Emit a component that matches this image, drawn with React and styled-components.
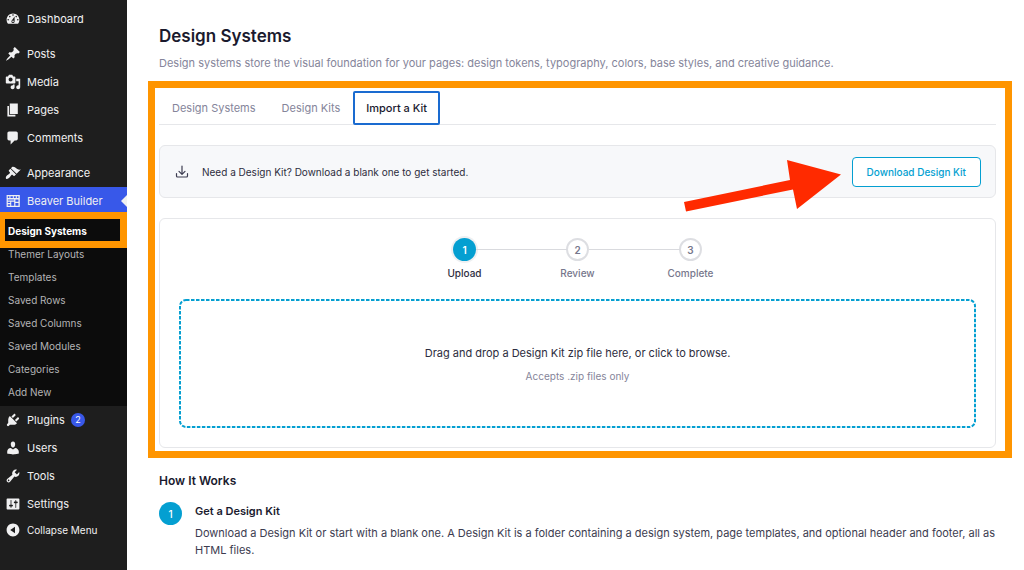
import React from "react";
import styled, { createGlobalStyle, css } from "styled-components";

const GlobalStyle = createGlobalStyle`
  *, *::before, *::after { box-sizing: border-box; }
  body {
    margin: 0;
    background: #fff;
    font-family: Inter, "Liberation Sans", sans-serif;
    font-size: 11px;
    color: #3c3c50;
  }
  h1, h2, h3, p, ul, ol { margin: 0; padding: 0; }
  ul, ol { list-style: none; }
  button { font-family: inherit; cursor: pointer; }
`;

const orange = "#ff9500";
const cyan = "#049fd1";
const line = "#e6e7ea";

const Page = styled.div`
  display: flex;
  min-height: 100vh;
`;

/* ---------- Sidebar ---------- */

const Sidebar = styled.nav`
  flex: 0 0 127px;
  padding-top: 5px;
  background: #1e1e1e;
`;

const MenuGroup = styled.ul`
  margin-bottom: ${(p) => (p.$spaced ? "7px" : "0")};
`;

const MenuLink = styled.a`
  position: relative;
  display: flex;
  align-items: center;
  gap: 6px;
  height: 28px;
  padding-left: 5px;
  color: #f0f0f1;
  font-size: 11px;
  text-decoration: none;
  white-space: nowrap;
  ${(p) =>
    p.$active &&
    css`
      background: #3858e9;
      &::after {
        content: "";
        position: absolute;
        right: 0;
        top: 8px;
        border: 6px solid transparent;
        border-left: 0;
        border-right-color: #f0f0f1;
      }
    `}
`;

const CollapseButton = styled.button`
  display: flex;
  align-items: center;
  gap: 6px;
  width: 100%;
  height: 24px;
  padding: 0 0 0 5px;
  border: 0;
  background: none;
  color: #f0f0f1;
  font-size: 10px;
`;

const MenuIcon = styled.svg`
  width: 16px;
  height: 16px;
  flex: none;
  fill: currentColor;
`;

const Badge = styled.span`
  display: grid;
  place-items: center;
  width: 14px;
  height: 14px;
  border-radius: 50%;
  background: #3858e9;
  color: #fff;
  font-size: 9px;
  line-height: 14px;
`;

const SubMenu = styled.ul`
  padding: 4px 0 3px;
  background: #0c0c0c;
`;

const SubItem = styled.li`
  position: relative;
`;

const SubLink = styled.a`
  display: flex;
  align-items: center;
  height: 23px;
  padding-left: 8px;
  color: ${(p) => (p.$current ? "#fff" : "#b4b4b6")};
  font-size: 10px;
  font-weight: ${(p) => (p.$current ? 700 : 400)};
  text-decoration: none;
`;

const SubHighlight = styled.span`
  position: absolute;
  inset: -7px 0 -6px -2px;
  border: 7px solid ${orange};
  pointer-events: none;
  clip-path: inset(0 0 0 2px);
`;

/* ---------- Main ---------- */

const Main = styled.main`
  flex: 1;
  min-width: 0;
  padding: 25px 12px 0 21px;
`;

const Header = styled.header`
  padding-left: 11px;
  margin-bottom: 10px;
`;

const Title = styled.h1`
  font-size: 17px;
  line-height: 22px;
  font-weight: 600;
  color: #1a1a2e;
`;

const Subtitle = styled.p`
  margin-top: 8px;
  line-height: 16px;
  font-size: 11px;
  color: #85859a;
`;

const Callout = styled.section`
  border: 7px solid ${orange};
  padding: 3px 9px 3px 4px;
`;

const Tabs = styled.div`
  display: flex;
  border-bottom: 1px solid ${line};
`;

const Tab = styled.button`
  height: 34px;
  margin-bottom: -1px;
  padding: 0 11px;
  border: 2px solid ${(p) => (p.$active ? "#1a6bd0" : "transparent")};
  border-radius: 2px;
  background: none;
  color: ${(p) => (p.$active ? "#1a1a2e" : "#85859a")};
  font-size: 11px;
  font-weight: ${(p) => (p.$active ? 500 : 400)};
`;

const Notice = styled.div`
  display: flex;
  align-items: center;
  gap: 12px;
  height: 53px;
  margin-top: 20px;
  padding: 0 14px;
  border: 1px solid ${line};
  border-radius: 6px;
  background: #f7f8fa;
`;

const NoticeIcon = styled.svg`
  width: 16px;
  height: 16px;
  flex: none;
  fill: none;
  stroke: #3c3c50;
  stroke-width: 1.2;
  stroke-linecap: round;
  stroke-linejoin: round;
`;

const NoticeText = styled.p`
  flex: 1;
  font-size: 10px;
  color: #2d2d40;
`;

const ButtonWrap = styled.div`
  position: relative;
`;

const OutlineButton = styled.button`
  height: 30px;
  padding: 0 14px;
  border: 1px solid ${cyan};
  border-radius: 4px;
  background: #fff;
  color: ${cyan};
  font-size: 10px;
  font-weight: 500;
`;

const Arrow = styled.svg`
  position: absolute;
  right: calc(100% + 10px);
  top: 0;
  width: 160px;
  height: 56px;
  overflow: visible;
  fill: #ff2a00;
  pointer-events: none;
`;

const Card = styled.div`
  margin-top: 20px;
  padding: 19px;
  border: 1px solid ${line};
  border-radius: 6px;
`;

const Steps = styled.ol`
  display: flex;
  justify-content: center;
  gap: 13px;
`;

const Step = styled.li`
  position: relative;
  display: flex;
  flex-direction: column;
  align-items: center;
  gap: 5px;
  width: 100px;
  font-size: 10px;
  line-height: 14px;
  font-weight: 500;
  color: ${(p) => (p.$active ? "#2d2d40" : "#77778c")};

  &:not(:first-child)::before {
    content: "";
    position: absolute;
    right: calc(50% + 11px);
    top: 11px;
    width: 91px;
    height: 1px;
    background: #d9dade;
  }
`;

const StepNumber = styled.span`
  display: grid;
  place-items: center;
  width: 23px;
  height: 23px;
  border: ${(p) => (p.$active ? "0" : "2px solid #dddee2")};
  border-radius: 50%;
  background: ${(p) => (p.$active ? cyan : "#fff")};
  box-shadow: ${(p) => (p.$active ? "0 0 0 2px #eef0f2" : "none")};
  color: ${(p) => (p.$active ? "#fff" : "#77778c")};
  font-size: 10px;
  font-weight: 600;
`;

const DropZone = styled.button`
  position: relative;
  display: flex;
  flex-direction: column;
  align-items: center;
  justify-content: center;
  gap: 8px;
  width: 100%;
  height: 129px;
  margin-top: 19px;
  border: 0;
  background: #fff;
`;

const DashedOutline = styled.svg`
  position: absolute;
  inset: 0;
  width: 100%;
  height: 100%;
  pointer-events: none;

  rect {
    width: calc(100% - 2px);
    height: calc(100% - 2px);
    fill: none;
    stroke: ${cyan};
    stroke-width: 2;
    stroke-dasharray: 3.5 1.5;
  }
`;

const DropTitle = styled.span`
  font-size: 11px;
  line-height: 16px;
  color: #2d2d40;
`;

const DropHint = styled.span`
  font-size: 10px;
  line-height: 14px;
  color: #85859a;
`;

const HowSection = styled.section`
  padding: 14px 12px 12px 11px;
`;

const HowTitle = styled.h2`
  font-size: 12px;
  line-height: 18px;
  font-weight: 600;
  color: #1a1a2e;
`;

const HowItem = styled.li`
  display: flex;
  gap: 13px;
  margin-top: 12px;
`;

const HowNumber = styled.span`
  display: grid;
  place-items: center;
  flex: none;
  width: 23px;
  height: 23px;
  border-radius: 50%;
  background: ${cyan};
  color: #fff;
  font-size: 10px;
  font-weight: 500;
`;

const HowHeading = styled.h3`
  margin-bottom: 5px;
  font-size: 11px;
  line-height: 18px;
  font-weight: 600;
  color: #1a1a2e;
`;

const HowText = styled.p`
  font-size: 11px;
  line-height: 17px;
  color: #3c3c50;
`;

/* ---------- Data ---------- */

const icons = {
  dashboard:
    "M3.76 16h12.48c1.09-1.37 1.76-3.11 1.76-5 0-4.42-3.58-8-8-8s-8 3.58-8 8c0 1.89.67 3.63 1.76 5zM10 4c.55 0 1 .45 1 1s-.45 1-1 1-1-.45-1-1 .45-1 1-1zM6 6c.55 0 1 .45 1 1s-.45 1-1 1-1-.45-1-1 .45-1 1-1zm8 0c.55 0 1 .45 1 1s-.45 1-1 1-1-.45-1-1 .45-1 1-1zm-5.37 5.55L12 7v6c0 1.1-.9 2-2 2s-2-.9-2-2c0-.57.24-1.08.63-1.45zM4 10c.55 0 1 .45 1 1s-.45 1-1 1-1-.45-1-1 .45-1 1-1zm12 0c.55 0 1 .45 1 1s-.45 1-1 1-1-.45-1-1 .45-1 1-1zm-5 3c0-.55-.45-1-1-1s-1 .45-1 1 .45 1 1 1 1-.45 1-1z",
  posts:
    "M10.44 3.02l1.82-1.82 6.36 6.35-1.83 1.82c-1.05-.68-2.48-.57-3.41.36l-.75.75c-.92.93-1.04 2.35-.35 3.41l-1.83 1.82-2.41-2.41-2.8 2.79c-.42.42-3.38 2.71-3.8 2.29s1.86-3.39 2.28-3.81l2.79-2.79L4.1 9.36l1.83-1.82c1.05.69 2.48.57 3.4-.36l.75-.75c.93-.92 1.05-2.35.36-3.41z",
  media:
    "M13 11V4c0-.55-.45-1-1-1h-1.67L9 1H5L3.67 3H2c-.55 0-1 .45-1 1v7c0 .55.45 1 1 1h10c.55 0 1-.45 1-1zM7 4.5c1.38 0 2.5 1.12 2.5 2.5S8.38 9.5 7 9.5 4.5 8.38 4.5 7 5.62 4.5 7 4.5zM14 6h5v10.5c0 1.38-1.12 2.5-2.5 2.5S14 17.88 14 16.5s1.12-2.5 2.5-2.5c.17 0 .34.02.5.05V9h-3V6zm-4 8.05V13h2v3.5c0 1.38-1.12 2.5-2.5 2.5S7 17.88 7 16.5 8.12 14 9.5 14c.17 0 .34.02.5.05z",
  pages: "M6 15V2h10v13H6zm-1 1h8v2H3V5h2v11z",
  comments:
    "M5 2h9c1.1 0 2 .9 2 2v7c0 1.1-.9 2-2 2h-2l-5 5v-5H5c-1.1 0-2-.9-2-2V4c0-1.1.9-2 2-2z",
  appearance:
    "M14.48 11.06L7.41 3.99l1.5-1.5c.5-.56 2.3-.47 3.51.32 1.21.8 1.43 1.28 2.91 2.1 1.18.64 2.45 1.26 4.45.85zm-.71.71L6.7 4.7 4.93 6.47c-.39.39-.39 1.02 0 1.41l1.06 1.06c.39.39.39 1.03 0 1.42-.6.6-1.43 1.11-2.21 1.69-.35.26-.7.53-1.01.84C1.43 14.23.4 16.08 1.4 17.07c.99 1 2.84-.03 4.18-1.36.31-.31.58-.66.85-1.02.57-.78 1.08-1.61 1.69-2.21.39-.39 1.02-.39 1.41 0l1.06 1.06c.39.39 1.02.39 1.41 0z",
  builder:
    "M2 2.5h16.500v15H2zM3.500 4v2.200h2V4zM6.800 4v2.200h3V4zM11 4v2.200h2.500V4zM14.800 4v2.200h2V4zM3.500 8v1.500h8V8zM13 8v3h3.800V8zM3.500 11v1.500h3V11zM7.800 11v5h3.700v-5zM3.500 14v2h3v-2zM13 12.500V16h3.800v-3.500z",
  plugins:
    "M13.11 4.36L9.87 7.6 8 5.73l3.24-3.24c.35-.34 1.05-.2 1.56.32.52.51.66 1.21.31 1.55zm-8 1.77l.91-1.12 9.01 9.01-1.19.84c-.71.71-2.63 1.16-3.82 1.16H6.14L4.9 17.26c-.59.59-1.54.59-2.12 0-.59-.58-.59-1.53 0-2.12l1.24-1.24v-3.88c0-1.13.4-3.19 1.09-3.89zm7.26 3.97l3.24-3.24c.34-.35 1.04-.21 1.55.31.52.51.66 1.21.31 1.55l-3.24 3.25z",
  users:
    "M10 9.25c-2.27 0-2.73-3.44-2.73-3.44C7 4.02 7.82 2 9.97 2c2.16 0 2.98 2.02 2.71 3.81 0 0-.41 3.44-2.68 3.44zm0 2.57L12.72 10c2.39 0 4.52 2.33 4.52 4.53v2.49s-3.65 1.13-7.24 1.13c-3.65 0-7.24-1.13-7.24-1.13v-2.49c0-2.25 1.94-4.48 4.47-4.48z",
  tools:
    "M16.68 9.77c-1.34 1.34-3.3 1.67-4.95.99l-5.41 6.52c-.99.99-2.59.99-3.58 0s-.99-2.59 0-3.57l6.52-5.42c-.68-1.65-.35-3.61.99-4.95 1.28-1.28 3.12-1.62 4.72-1.06l-2.89 2.89 2.82 2.82 2.86-2.87c.53 1.58.18 3.39-1.08 4.65zM3.81 16.21c.4.39 1.04.39 1.43 0 .4-.4.4-1.04 0-1.43-.39-.4-1.03-.4-1.43 0-.39.39-.39 1.03 0 1.43z",
  settings:
    "M18 16V4c0-.55-.45-1-1-1H3c-.55 0-1 .45-1 1v12c0 .55.45 1 1 1h14c.55 0 1-.45 1-1zM8 11h1c.55 0 1 .45 1 1s-.45 1-1 1H8v1.5c0 .28-.22.5-.5.5s-.5-.22-.5-.5V13H6c-.55 0-1-.45-1-1s.45-1 1-1h1V5.5c0-.28.22-.5.5-.5s.5.22.5.5V11zm5-2h-1c-.55 0-1-.45-1-1s.45-1 1-1h1V5.5c0-.28.22-.5.5-.5s.5.22.5.5V7h1c.55 0 1 .45 1 1s-.45 1-1 1h-1v5.5c0 .28-.22.5-.5.5s-.5-.22-.5-.5V9z",
  collapse:
    "M10 2c4.42 0 8 3.58 8 8s-3.58 8-8 8-8-3.580-8-8 3.580-8 8-8zm2.500 12V6L6.500 10z",
};

const menuGroups = [
  { spaced: true, items: [["dashboard", "Dashboard"]] },
  {
    spaced: true,
    items: [
      ["posts", "Posts"],
      ["media", "Media"],
      ["pages", "Pages"],
      ["comments", "Comments"],
    ],
  },
  {
    items: [
      ["appearance", "Appearance"],
      ["builder", "Beaver Builder"],
    ],
  },
];

const subItems = [
  "Design Systems",
  "Themer Layouts",
  "Templates",
  "Saved Rows",
  "Saved Columns",
  "Saved Modules",
  "Categories",
  "Add New",
];

const lowerItems = [
  ["plugins", "Plugins", 2],
  ["users", "Users"],
  ["tools", "Tools"],
  ["settings", "Settings"],
];

const tabs = ["Design Systems", "Design Kits", "Import a Kit"];
const steps = ["Upload", "Review", "Complete"];

function Icon({ name }) {
  return (
    <MenuIcon viewBox="0 0 20 20" aria-hidden="true">
      <path fillRule="evenodd" d={icons[name]} />
    </MenuIcon>
  );
}

function MenuItem({ icon, label, count }) {
  return (
    <li>
      <MenuLink href="#" $active={icon === "builder"}>
        <Icon name={icon} />
        {label}
        {count && <Badge>{count}</Badge>}
      </MenuLink>
    </li>
  );
}

export default function App() {
  return (
    <Page>
      <GlobalStyle />
      <Sidebar aria-label="Admin menu">
        {menuGroups.map((group, i) => (
          <MenuGroup key={i} $spaced={group.spaced}>
            {group.items.map(([icon, label]) => (
              <MenuItem key={icon} icon={icon} label={label} />
            ))}
          </MenuGroup>
        ))}
        <SubMenu>
          {subItems.map((label, i) => (
            <SubItem key={label}>
              <SubLink href="#" $current={i === 0}>
                {label}
              </SubLink>
              {i === 0 && <SubHighlight />}
            </SubItem>
          ))}
        </SubMenu>
        <MenuGroup>
          {lowerItems.map(([icon, label, count]) => (
            <MenuItem key={icon} icon={icon} label={label} count={count} />
          ))}
        </MenuGroup>
        <CollapseButton type="button">
          <Icon name="collapse" />
          Collapse Menu
        </CollapseButton>
      </Sidebar>

      <Main>
        <Header>
          <Title>Design Systems</Title>
          <Subtitle>
            Design systems store the visual foundation for your pages: design
            tokens, typography, colors, base styles, and creative guidance.
          </Subtitle>
        </Header>

        <Callout>
          <Tabs role="tablist">
            {tabs.map((label, i) => (
              <Tab key={label} type="button" role="tab" aria-selected={i === 2} $active={i === 2}>
                {label}
              </Tab>
            ))}
          </Tabs>

          <Notice>
            <NoticeIcon viewBox="0 0 16 16" aria-hidden="true">
              <path d="M8 2v8M5 7.300l3 3 3-3M2.500 9.500v2.500q0 1 1 1h9q1 0 1-1V9.500" />
            </NoticeIcon>
            <NoticeText>
              Need a Design Kit? Download a blank one to get started.
            </NoticeText>
            <ButtonWrap>
              <OutlineButton type="button">Download Design Kit</OutlineButton>
              <Arrow viewBox="0 0 160 56" aria-hidden="true">
                <polygon points="2,45 108,23 105,3 159,17.500 115,52 111,32.500 4,54.500" />
              </Arrow>
            </ButtonWrap>
          </Notice>

          <Card>
            <Steps>
              {steps.map((label, i) => (
                <Step key={label} $active={i === 0}>
                  <StepNumber $active={i === 0}>{i + 1}</StepNumber>
                  {label}
                </Step>
              ))}
            </Steps>
            <DropZone type="button">
              <DashedOutline aria-hidden="true">
                <rect x="1" y="1" rx="6" />
              </DashedOutline>
              <DropTitle>
                Drag and drop a Design Kit zip file here, or click to browse.
              </DropTitle>
              <DropHint>Accepts .zip files only</DropHint>
            </DropZone>
          </Card>
        </Callout>

        <HowSection>
          <HowTitle>How It Works</HowTitle>
          <ol>
            <HowItem>
              <HowNumber>1</HowNumber>
              <div>
                <HowHeading>Get a Design Kit</HowHeading>
                <HowText>
                  Download a Design Kit or start with a blank one. A Design Kit
                  is a folder containing a design system, page templates, and
                  optional header and footer, all as HTML files.
                </HowText>
              </div>
            </HowItem>
          </ol>
        </HowSection>
      </Main>
    </Page>
  );
}
